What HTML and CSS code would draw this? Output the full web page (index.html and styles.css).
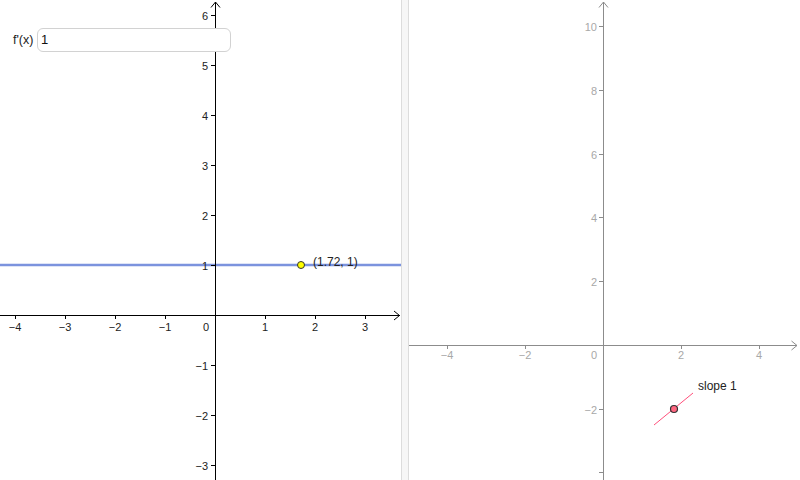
FILE: index.html
```html
<!DOCTYPE html>
<html>
<head>
<meta charset="utf-8">
<link rel="stylesheet" href="styles.css">
</head>
<body>
<div class="app">
  <div class="view left">
    <svg class="graph" width="401" height="480" viewBox="0 0 401 480">
      <line class="fline" x1="0" y1="265" x2="401" y2="265"/>
      <g class="axis">
        <line x1="215.5" y1="2" x2="215.5" y2="480"/>
        <polyline points="211,7.5 215.5,2 220,7.5"/>
        <line x1="0" y1="315.5" x2="399.5" y2="315.5"/>
        <polyline points="394,311 399.5,315.5 394,320"/>
        <line x1="15.5" y1="315" x2="15.5" y2="319"/>
        <line x1="65.5" y1="315" x2="65.5" y2="319"/>
        <line x1="115.5" y1="315" x2="115.5" y2="319"/>
        <line x1="165.5" y1="315" x2="165.5" y2="319"/>
        <line x1="265.5" y1="315" x2="265.5" y2="319"/>
        <line x1="315.5" y1="315" x2="315.5" y2="319"/>
        <line x1="365.5" y1="315" x2="365.5" y2="319"/>
        <line x1="211" y1="15.5" x2="215" y2="15.5"/>
        <line x1="211" y1="65.5" x2="215" y2="65.5"/>
        <line x1="211" y1="115.5" x2="215" y2="115.5"/>
        <line x1="211" y1="165.5" x2="215" y2="165.5"/>
        <line x1="211" y1="215.5" x2="215" y2="215.5"/>
        <line x1="211" y1="265.5" x2="215" y2="265.5"/>
        <line x1="211" y1="365.5" x2="215" y2="365.5"/>
        <line x1="211" y1="415.5" x2="215" y2="415.5"/>
        <line x1="211" y1="465.5" x2="215" y2="465.5"/>
      </g>
      <g class="lbl dark">
        <text x="15" y="331" text-anchor="middle">−4</text>
        <text x="65" y="331" text-anchor="middle">−3</text>
        <text x="115" y="331" text-anchor="middle">−2</text>
        <text x="165" y="331" text-anchor="middle">−1</text>
        <text x="206" y="331" text-anchor="middle">0</text>
        <text x="265" y="331" text-anchor="middle">1</text>
        <text x="315" y="331" text-anchor="middle">2</text>
        <text x="365" y="331" text-anchor="middle">3</text>
        <text x="208" y="19.5" text-anchor="end">6</text>
        <text x="208" y="69.5" text-anchor="end">5</text>
        <text x="208" y="119.5" text-anchor="end">4</text>
        <text x="208" y="169.5" text-anchor="end">3</text>
        <text x="208" y="219.5" text-anchor="end">2</text>
        <text x="208" y="269.5" text-anchor="end">1</text>
        <text x="208" y="369.5" text-anchor="end">−1</text>
        <text x="208" y="419.5" text-anchor="end">−2</text>
        <text x="208" y="469.5" text-anchor="end">−3</text>
      </g>
      <circle class="pt-yellow" cx="301" cy="265" r="3.5"/>
      <text class="ptlabel" x="313" y="265.5">(1.72, 1)</text>
    </svg>
    <div class="inputbar">
      <span class="inlabel">f'(x)</span>
      <div class="inbox">1</div>
    </div>
  </div>
  <div class="splitter"></div>
  <div class="view right">
    <svg class="graph" width="391" height="480" viewBox="409 0 391 480">
      <g class="axis grey">
        <line x1="603.5" y1="2" x2="603.5" y2="480"/>
        <polyline points="599,7.5 603.5,2 608,7.5"/>
        <line x1="409" y1="345.5" x2="797" y2="345.5"/>
        <polyline points="791.5,341 797,345.5 791.5,350"/>
        <line x1="525.5" y1="345" x2="525.5" y2="349"/>
        <line x1="447.5" y1="345" x2="447.5" y2="349"/>
        <line x1="681.5" y1="345" x2="681.5" y2="349"/>
        <line x1="759.5" y1="345" x2="759.5" y2="349"/>
        <line x1="599" y1="26.5" x2="603" y2="26.5"/>
        <line x1="599" y1="90.5" x2="603" y2="90.5"/>
        <line x1="599" y1="154.5" x2="603" y2="154.5"/>
        <line x1="599" y1="217.5" x2="603" y2="217.5"/>
        <line x1="599" y1="281.5" x2="603" y2="281.5"/>
        <line x1="599" y1="409.5" x2="603" y2="409.5"/>
        <line x1="599" y1="472.5" x2="603" y2="472.5"/>
      </g>
      <g class="lbl light">
        <text x="447" y="359" text-anchor="middle">−4</text>
        <text x="525" y="359" text-anchor="middle">−2</text>
        <text x="594" y="359" text-anchor="middle">0</text>
        <text x="681" y="359" text-anchor="middle">2</text>
        <text x="759" y="359" text-anchor="middle">4</text>
        <text x="597" y="30.5" text-anchor="end">10</text>
        <text x="597" y="94.5" text-anchor="end">8</text>
        <text x="597" y="158.5" text-anchor="end">6</text>
        <text x="597" y="221.5" text-anchor="end">4</text>
        <text x="597" y="285.5" text-anchor="end">2</text>
        <text x="597" y="413.5" text-anchor="end">−2</text>
      </g>
      <line class="slope" x1="654" y1="425" x2="693" y2="393"/>
      <circle class="pt-pink" cx="674" cy="409" r="3.5"/>
      <text class="ptlabel" x="698" y="389.5">slope 1</text>
    </svg>
  </div>
</div>
</body>
</html>
```
FILE: styles.css
```css
html, body {
  margin: 0;
  padding: 0;
  background: #ffffff;
}
body {
  font-family: "Liberation Sans", Arial, sans-serif;
}
.app {
  display: flex;
  width: 800px;
  height: 480px;
  overflow: hidden;
}
.view {
  position: relative;
  height: 480px;
  background: #ffffff;
}
.left {
  width: 401px;
  flex: none;
}
.right {
  flex: 1;
}
.graph {
  display: block;
}
.splitter {
  width: 6px;
  flex: none;
  background: #f6f6f6;
  border-left: 1px solid #dcdcdc;
  border-right: 1px solid #dcdcdc;
}
.axis line, .axis polyline {
  stroke: #000000;
  stroke-width: 1;
  fill: none;
  shape-rendering: crispEdges;
}
.axis polyline {
  shape-rendering: auto;
}
.axis.grey line, .axis.grey polyline {
  stroke: #8c8c8c;
}
.lbl text {
  font-family: "Liberation Sans", Arial, sans-serif;
  font-size: 11px;
}
.lbl.dark text {
  fill: #222222;
}
.lbl.light text {
  fill: #a8a8a8;
}
.fline {
  stroke: #7c93de;
  stroke-width: 2.5;
}
.pt-yellow {
  fill: #ffff00;
  stroke: #333333;
  stroke-width: 1;
}
.pt-pink {
  fill: #ff6680;
  stroke: #333333;
  stroke-width: 1.2;
}
.slope {
  stroke: #ff4f7b;
  stroke-width: 1;
}
.ptlabel {
  font-family: "Liberation Sans", Arial, sans-serif;
  font-size: 12px;
  fill: #222222;
}
.inputbar {
  position: absolute;
  left: 13px;
  top: 28px;
  display: flex;
  align-items: center;
  gap: 2px;
}
.inlabel {
  width: 22px;
  font-size: 12.5px;
  color: #222222;
  white-space: nowrap;
}
.inbox {
  width: 189px;
  height: 22px;
  line-height: 22px;
  padding-left: 3px;
  border: 1px solid #d2d2d2;
  border-radius: 6px;
  background: #ffffff;
  font-size: 13px;
  color: #111111;
}
```
